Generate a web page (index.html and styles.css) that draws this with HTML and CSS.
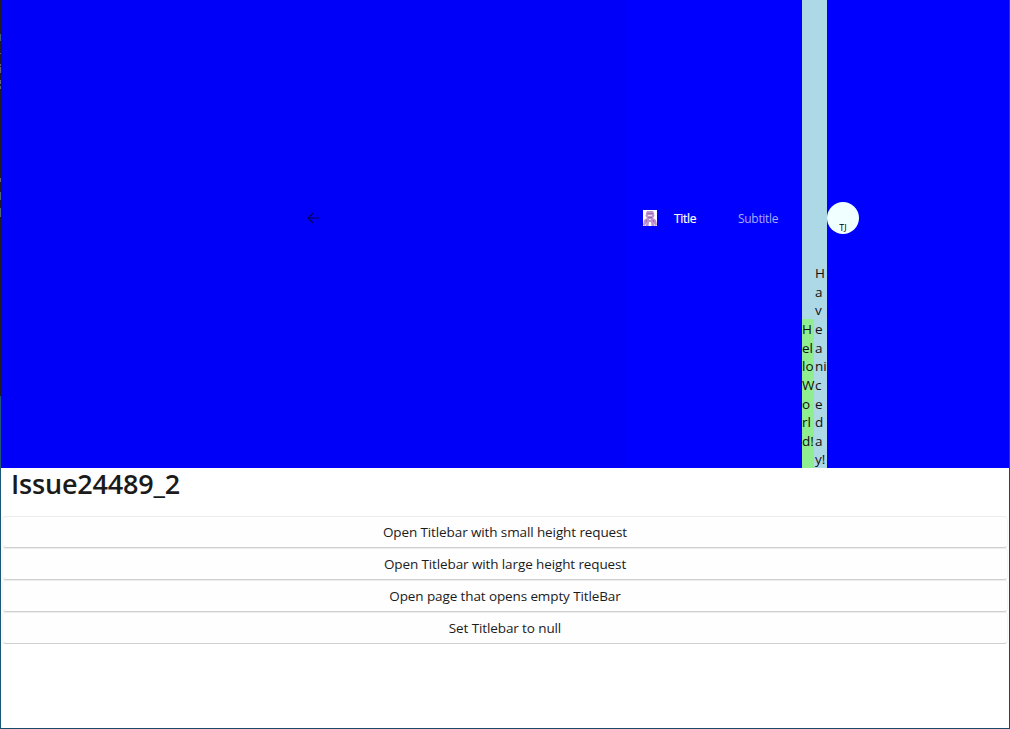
FILE: index.html
```html
<!DOCTYPE html>
<html lang="en">
<head>
<meta charset="utf-8">
<title>Issue24489_2</title>
<link rel="stylesheet" href="styles.css">
</head>
<body>
<div class="window">
  <header class="titlebar">
    <div class="leading">
      <svg class="back" width="13" height="12" viewBox="0 0 13 12"><path d="M12.500 6H1M6 1L1 6l5 5" fill="none" stroke="#000050" stroke-width="1.1"/></svg>
    </div>
    <div class="caption">
      <svg class="logo" width="14" height="16" viewBox="0 0 14 16"><path fill="#fff" d="M0 0h14v16H0z"/><path fill="#bd93cf" d="M3 3l1-2h6l1 2 .5 3L10 8l3 2 1 5-1.500 1-2-3 1 3H8.500L8 12H6l-.5 4H2.500l1-3-2 3L0 15l1-5 3-2-1.500-2z"/><path fill="#9a6bb2" d="M4 3h6v1H4zM5 7h4v1H5zM3 10h1v2H3zM10 10h1v2h-1z"/><path fill="#eadbf0" d="M5 5h4v1H5zM6 9h2v1H6z"/></svg>
      <span class="title">Title</span>
      <span class="subtitle">Subtitle</span>
    </div>
    <div class="content">
      <div class="hello">H<br>el<br>lo<br>W<br>o<br>rl<br>d!</div>
      <div class="nice">H<br>a<br>v<br>e<br>a<br>ni<br>c<br>e<br>d<br>a<br>y!</div>
    </div>
    <div class="avatar"><span>TJ</span></div>
  </header>
  <main>
    <h1>Issue24489_2</h1>
    <div class="buttons">
      <button>Open Titlebar with small height request</button>
      <button>Open Titlebar with large height request</button>
      <button>Open page that opens empty TitleBar</button>
      <button>Set Titlebar to null</button>
    </div>
  </main>
</div>
</body>
</html>
```
FILE: styles.css
```css
* { box-sizing: border-box; }
body { margin: 0; font-family: "Open Sans", "Noto Sans", sans-serif; color: #1b1b1b; }
.window {
  height: 729px;
  padding: 0 1px 1px;
  background:
    linear-gradient(#1c1c1c 34px, #44606e 34px 41px, #1c1c1c 41px 53px, #666 53px 54px, #1c1c1c 54px 64px, #666 64px 66px, #1c1c1c 66px 67px, #666 67px 73px, #1c1c1c 73px 80px, #666 80px 84px, #1c1c1c 84px 86px, #566 86px 89px, #1c1c1c 89px 178px, #666 178px 182px, #1c1c1c 182px 192px, #566 192px 200px, #1c1c1c 200px 208px, #566 208px 217px, #1c1c1c 217px 396px, #1b5878 396px) left / 1px 100% no-repeat,
    #1b4a68;
}
.titlebar { display: flex; height: 468px; background: #00f; }
.leading { display: flex; align-items: center; width: 624px; padding: 0 0 32px 306px; background: #0000f8; }
.back { display: block; }
.caption { display: flex; align-items: center; width: 177px; padding: 0 0 32px 18px; color: #fff; font-size: 12px; white-space: nowrap; }
.title { width: 64px; margin-left: 17px; letter-spacing: -0.3px; -webkit-text-stroke: 0.2px #fff; }
.subtitle { color: #a9a9ff; letter-spacing: -0.3px; }
.content { display: flex; align-items: flex-end; width: 25px; background: #add8e6; font-size: 13.5px; line-height: 18.66px; color: #111; white-space: nowrap; }
.hello { width: 12px; height: 149px; padding-top: 1px; background: #90ee90; }
.nice { width: 13px; height: 204.1px; padding-left: 1px; }
.avatar { display: flex; align-items: flex-end; justify-content: center; width: 32px; height: 32px; margin-top: 202px; border-radius: 50%; background: #f0ffff; color: #000; font-size: 9px; line-height: 13px; }
main { height: 260px; background: #fff; }
h1 { height: 48px; margin: 0; padding-left: 10px; font-size: 27px; font-weight: 600; line-height: 32px; letter-spacing: -0.2px; }
.buttons { display: flex; flex-direction: column; padding: 0 1px; }
button { height: 32px; padding: 0; border: 1px solid #f5f5f5; border-top-color: #ececec; border-bottom-color: #d0d0d0; border-radius: 4px; background: #fefefe; color: #1b1b1b; font: 13.5px/31px "Open Sans", "Noto Sans", sans-serif; letter-spacing: -0.11px; }
```
